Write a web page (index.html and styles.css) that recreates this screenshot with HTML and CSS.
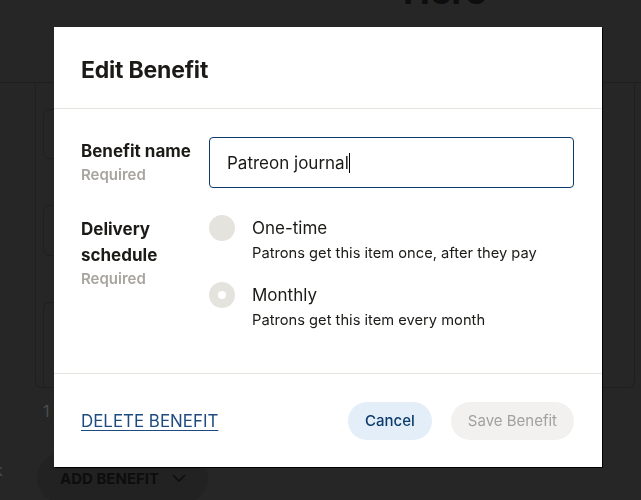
FILE: index.html
```html
<!DOCTYPE html>
<html lang="en">
<head>
<meta charset="utf-8">
<title>Edit Benefit</title>
<link rel="stylesheet" href="styles.css">
</head>
<body>
<div class="page">
  <header class="page-header">
    <h1 class="page-title">Here</h1>
  </header>
  <section class="bg-card">
    <div class="bg-field"></div>
    <div class="bg-field"></div>
    <div class="bg-field bg-field-tall"></div>
  </section>
  <div class="bg-count">1</div>
  <div class="bg-bottom">
    <span class="bg-k">k</span>
    <span class="bg-add">ADD BENEFIT
      <svg class="bg-chev" width="14" height="8" viewBox="0 0 14 8"><path d="M1 1l6 6 6-6" fill="none" stroke="#0d0d0d" stroke-width="1.6"/></svg>
    </span>
  </div>
</div>

<div class="modal" role="dialog" aria-labelledby="modal-title">
  <div class="modal-header">
    <h2 class="modal-title" id="modal-title">Edit Benefit</h2>
  </div>
  <div class="modal-body">
    <div class="row">
      <div class="label-col">
        <div class="label">Benefit name</div>
        <div class="required">Required</div>
      </div>
      <div class="field">
        <div class="input" role="textbox">Patreon journal<span class="caret"></span></div>
      </div>
    </div>
    <div class="row row-schedule">
      <div class="label-col">
        <div class="label">Delivery<br>schedule</div>
        <div class="required">Required</div>
      </div>
      <div class="field options">
        <div class="option">
          <span class="radio"></span>
          <div class="option-text">
            <div class="option-title">One-time</div>
            <div class="option-desc">Patrons get this item once, after they pay</div>
          </div>
        </div>
        <div class="option">
          <span class="radio radio-checked"></span>
          <div class="option-text">
            <div class="option-title">Monthly</div>
            <div class="option-desc">Patrons get this item every month</div>
          </div>
        </div>
      </div>
    </div>
  </div>
  <div class="modal-footer">
    <a class="delete-link" href="#">DELETE BENEFIT</a>
    <div class="actions">
      <button class="btn btn-cancel">Cancel</button>
      <button class="btn btn-save" disabled>Save Benefit</button>
    </div>
  </div>
</div>
</body>
</html>
```

FILE: styles.css
```css
* { box-sizing: border-box; }

html {
  -webkit-print-color-adjust: exact;
  print-color-adjust: exact;
  color-scheme: light;
  background-color: #262626;
}

body {
  margin: 0;
  padding: 0;
  background-color: #262626;
  font-family: Inter, "Noto Sans", sans-serif;
  overflow: hidden;
}

/* dimmed page behind the dialog */
.page {
  width: 641px;
  height: 500px;
  overflow: hidden;
  background-color: #262626;
}

.page-header {
  height: 83px;
  border-bottom: 1px solid #1e1e1e;
  padding-left: 403px;
  overflow: hidden;
}

.page-title {
  margin: 0;
  margin-top: -29px;
  font-size: 36px;
  line-height: 40px;
  font-weight: 700;
  color: #0d0d0d;
}

.bg-card {
  margin: 0 6px 0 35px;
  height: 305px;
  border: 1px solid #1f1f1f;
  border-top: none;
  border-radius: 0 0 6px 6px;
  padding: 26px 31px 0 7px;
  display: flex;
  flex-direction: column;
  gap: 46px;
}

.bg-field {
  height: 51px;
  border: 1px solid #1f1f1f;
  border-radius: 6px;
}

.bg-field-tall {
  height: 86px;
  border-radius: 6px 6px 0 0;
  border-bottom: none;
}

.bg-count {
  padding: 12px 0 0 43px;
  font-size: 16px;
  line-height: 22px;
  color: #4c4c4c;
}

.bg-bottom {
  display: flex;
  align-items: center;
  margin-top: 31px;
  margin-left: -6px;
}

.bg-k {
  font-size: 16px;
  color: #4c4c4c;
  width: 43px;
  margin-top: -16px;
}

.bg-add {
  display: flex;
  align-items: center;
  gap: 13px;
  height: 50px;
  padding: 0 22px 0 23px;
  border-radius: 25px;
  background-color: #222222;
  font-size: 15px;
  font-weight: 700;
  color: #0d0d0d;
}

.modal {
  position: fixed;
  left: 54px;
  top: 27px;
  width: 548px;
  height: 440px;
  background: #ffffff;
  box-shadow: 1px 1px 0 #000000;
  display: flex;
  flex-direction: column;
  color: #1b1a17;
}

.modal-header {
  padding: 28px 27px 25px;
  border-bottom: 1px solid #e6e4df;
}

.modal-title {
  margin: 0;
  font-size: 23px;
  line-height: 28px;
  font-weight: 700;
  letter-spacing: -0.2px;
  padding-top: 1px;
  margin-bottom: -1px;
}

.modal-body {
  flex: 1;
  padding: 28px 28px 0 27px;
  display: flex;
  flex-direction: column;
  gap: 27px;
  border-bottom: 1px solid #e6e4df;
}

.row {
  display: flex;
}

.label-col {
  width: 128px;
  flex: none;
  padding-top: 1px;
}

.label {
  font-size: 17px;
  line-height: 26px;
  font-weight: 700;
  color: #1b1a17;
}

.required {
  font-size: 15px;
  line-height: 22px;
  font-weight: 600;
  color: #a8a59f;
}

.field {
  flex: 1;
}

.input {
  height: 51px;
  border: 1px solid #0d3a6d;
  border-radius: 4px;
  padding: 0 17px;
  display: flex;
  align-items: center;
  font-size: 17px;
  color: #1b1a17;
}

.caret {
  display: inline-block;
  width: 1px;
  height: 20px;
  background: #000000;
}

.options {
  display: flex;
  flex-direction: column;
  gap: 17px;
}

.option {
  display: flex;
  gap: 17px;
}

.radio {
  width: 26px;
  height: 26px;
  border-radius: 50%;
  background: #e5e3de;
  flex: none;
  display: flex;
  align-items: center;
  justify-content: center;
}

.radio-checked::after {
  content: "";
  width: 8px;
  height: 8px;
  border-radius: 50%;
  background: #ffffff;
}

.option-title {
  font-size: 17px;
  line-height: 26px;
  color: #1b1a17;
}

.option-desc {
  font-size: 14.7px;
  line-height: 24px;
  color: #1b1a17;
}

.modal-footer {
  height: 93px;
  padding: 0 28px 0 27px;
  display: flex;
  align-items: center;
  justify-content: space-between;
}

.delete-link {
  font-size: 16.9px;
  color: #1d4b80;
  text-decoration: underline;
  text-underline-offset: 3px;
  text-decoration-thickness: 1px;
}

.actions {
  display: flex;
  gap: 19px;
}

.btn {
  height: 38px;
  border: none;
  border-radius: 19px;
  font-family: Inter, "Noto Sans", sans-serif;
  font-size: 15px;
  font-weight: 500;
  padding: 0 17px;
  white-space: nowrap;
}

.btn-cancel {
  background: #e3eef8;
  color: #0b3a6b;
}

.btn-save {
  background: #f2f1ef;
  color: #a3a19d;
  font-weight: 400;
}
```
